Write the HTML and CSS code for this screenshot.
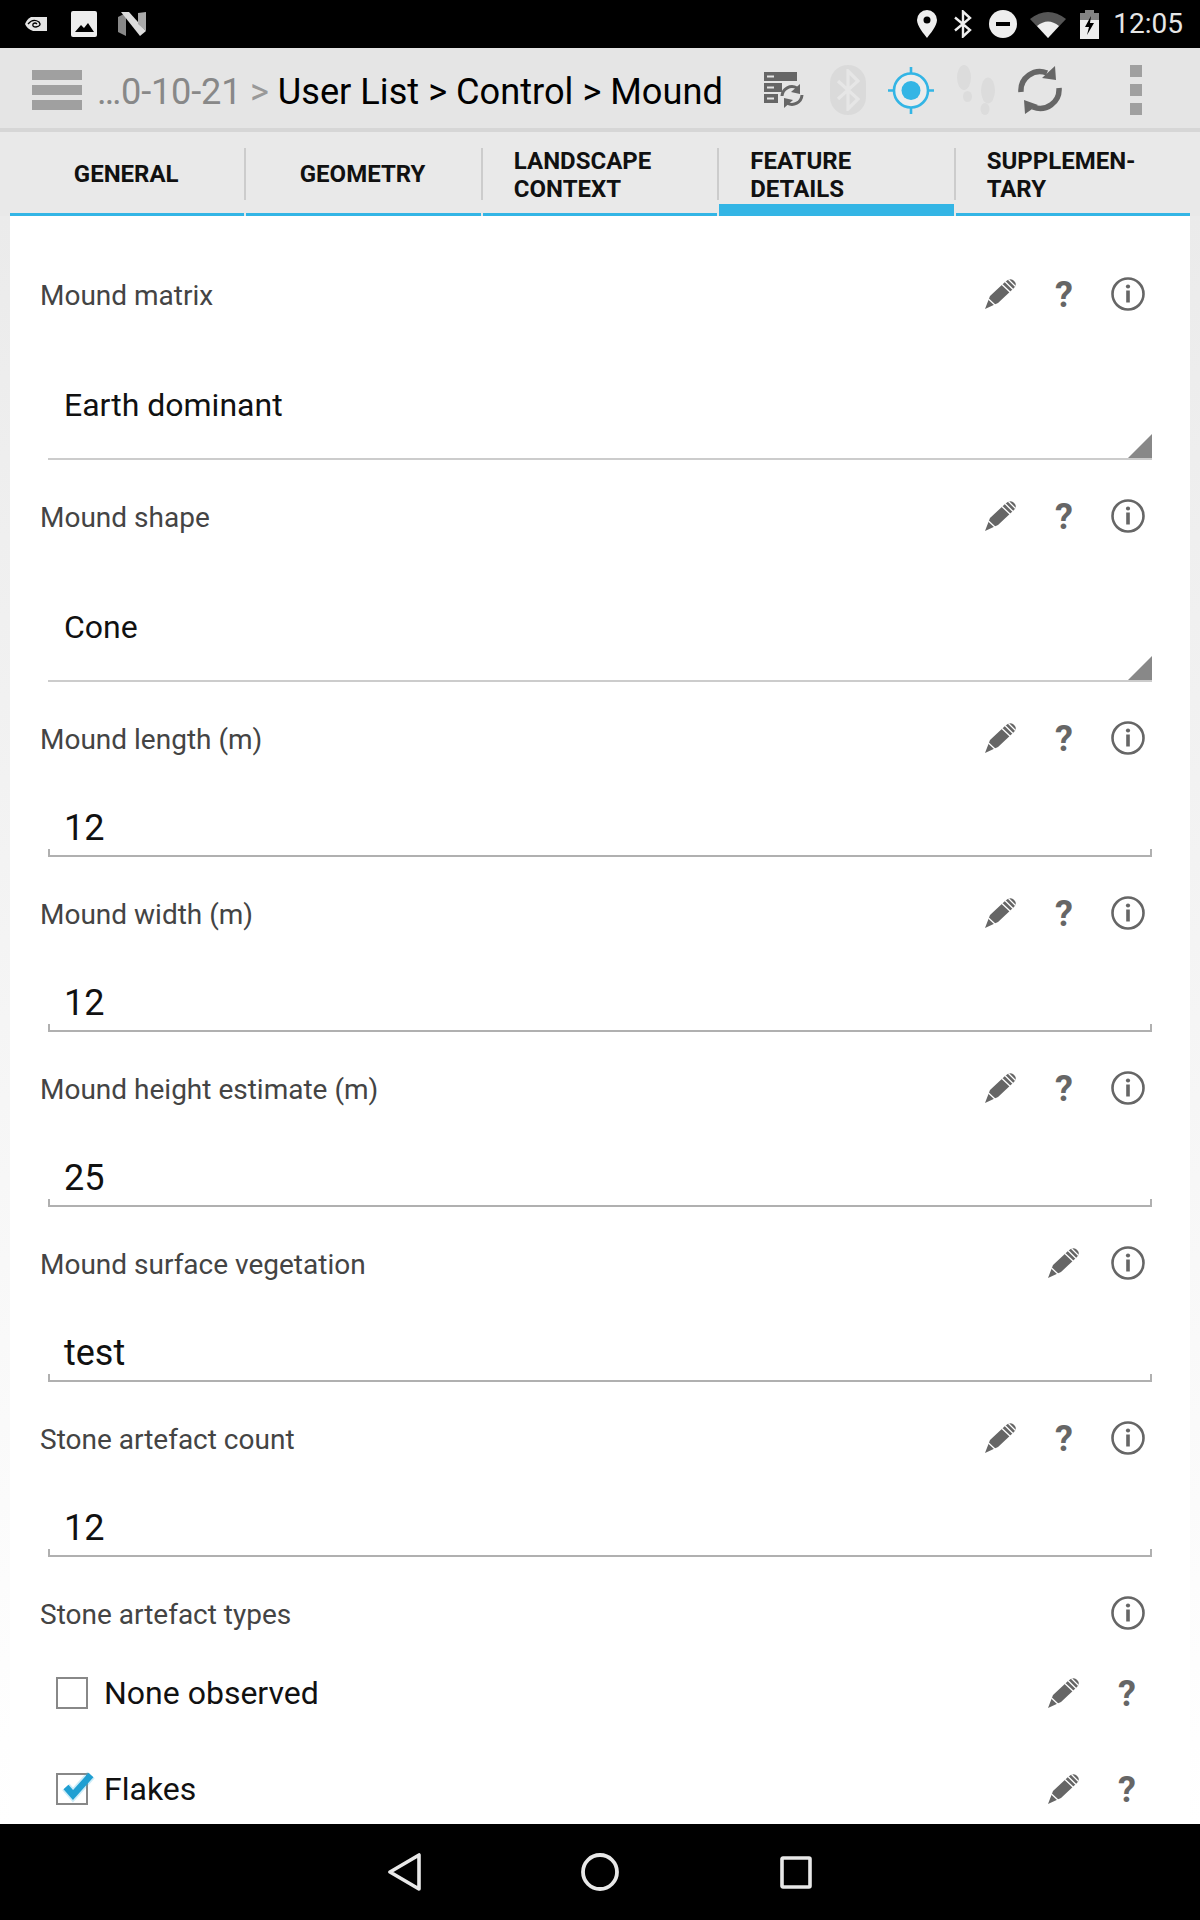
FILE: index.html

```html
<!DOCTYPE html>
<html>
	<head>
		<meta http-equiv="Content-Type" content="text/html; charset=utf-8" />
		<title>Mound</title>
		<link rel="stylesheet" href="styles.css">
	</head>
	<body>
		<svg class="defs" width="0" height="0">
			<symbol id="pencil" viewBox="0 0 32 32">
				<path d="M0 31 L5 18 L20 4 Q24 0 28 2 L30 4 Q32 7 29 10 L13 25 Z" fill="#666" />
				<path d="M3.5 21 L10.5 27.5 M17 6.5 L25.5 14.5 M20 3.5 L28 11.5 M23.5 1.5 L30.5 8.5" stroke="#fff" stroke-width="1.3" fill="none" />
			</symbol>
			<symbol id="info" viewBox="0 0 34 34">
				<circle cx="17" cy="17" r="15.5" fill="none" stroke="#666" stroke-width="2.6" />
				<circle cx="17" cy="9.5" r="2.1" fill="#666" />
				<rect x="15.2" y="13.5" width="3.6" height="12" fill="#666" />
			</symbol>
		</svg>
		<div id="screen">
			<div id="statusbar">
				<svg class="st-nvidia" width="22" height="14" viewBox="0 0 22 14">
					<path d="M6 0 H22 V14 H8 Q2 12 0 7 Q2 2 6 0 Z" fill="#e4e4e4" />
					<path d="M3 7 Q8 1 14 5 Q17 9 11 10 Q7 10 8 7 Q10 5 12 7" fill="none" stroke="#000" stroke-width="1.3" />
				</svg>
				<svg class="st-image" width="26" height="26" viewBox="0 0 26 26">
					<rect width="26" height="26" rx="2" fill="#eee" />
					<path d="M4 21 L10 14 L13 17 L17 12 L23 21 Z" fill="#000" />
				</svg>
				<svg class="st-n" width="28" height="24" viewBox="0 0 28 24">
					<path d="M0 5 L8 1 V24 L0 20 Z" fill="#888" />
					<path d="M3 0 H11 L28 19 L22 24 Z" fill="#ddd" />
					<path d="M20 1 L28 0 V19 L20 12 Z" fill="#aaa" />
				</svg>
				<div class="st-right">
					<svg width="20" height="28" viewBox="0 0 20 28"><path fill-rule="evenodd" d="M10 0 A10 10 0 0 1 20 10 C20 16 13 24 10 28 C7 24 0 16 0 10 A10 10 0 0 1 10 0 Z M10 6.5 A3.5 3.5 0 1 0 10 13.5 A3.5 3.5 0 1 0 10 6.5 Z" fill="#eee" /></svg>
					<svg class="st-bt" width="18" height="28" viewBox="0 0 18 28"><path d="M1 7.5 L16 20 L9 26.5 V1.5 L16 8 L1 20.5" fill="none" stroke="#eee" stroke-width="2.4" /></svg>
					<svg class="st-dnd" width="28" height="28" viewBox="0 0 28 28"><circle cx="14" cy="14" r="14" fill="#eee" /><rect x="7" y="12" width="14" height="4" fill="#000" /></svg>
					<svg class="st-wifi" width="36" height="28" viewBox="0 0 36 28"><path d="M0 9 Q18 -5 36 9 L18 28 Z" fill="#555" /><path d="M7 16 Q18 7 29 16 L18 28 Z" fill="#eee" /></svg>
					<svg class="st-batt" width="19" height="29" viewBox="0 0 19 29"><path d="M5 0 H14 V3 H19 V29 H0 V3 H5 Z" fill="#eee" /><path d="M0 0 H19 V10 H0 Z" fill="#000" opacity=".45" /><path d="M11 6 L5 17 H9 L7 25 L14 13 H10 Z" fill="#000" /></svg>
					<span class="st-time">12:05</span>
				</div>
			</div>

			<div id="actionbar">
				<div class="burger"><i></i><i></i><i></i></div>
				<div class="crumbs"><span class="crumb-old">…0-10-21 <b>&gt;</b></span> User List &gt; Control &gt; Mound</div>
				<svg class="ab-server" width="40" height="36" viewBox="0 0 40 36">
					<path d="M0 0 H33 V9 H0 Z M0 11 H18 V20 H0 Z M0 22 H14 V31 H0 Z" fill="#666" />
					<path d="M3 4.5 H10 M3 15.5 H10 M3 26.5 H10" stroke="#e5e5e5" stroke-width="2" />
					<path d="M18 24 A10 10 0 0 1 33 16" fill="none" stroke="#666" stroke-width="3" />
					<path d="M38 23 A10 10 0 0 1 23 31" fill="none" stroke="#666" stroke-width="3" />
					<path d="M36 12 V22 L27 20 Z M20 36 V26 L29 28 Z" fill="#666" />
				</svg>
				<div class="ab-bt">
					<svg width="24" height="42" viewBox="0 0 24 42"><path d="M2 12 L22 30 L12 40 V2 L22 12 L2 30" fill="none" stroke="#e6e6e6" stroke-width="3.2" /></svg>
				</div>
				<svg class="ab-target" width="46" height="47" viewBox="0 0 46 47">
					<circle cx="23" cy="23.5" r="17" fill="#ececec" stroke="#33b5e5" stroke-width="2.6" />
					<circle cx="23" cy="23.5" r="9.5" fill="#33b5e5" />
					<path d="M23 0 V7 M23 40 V47 M0 23.5 H7 M39 23.5 H46" stroke="#33b5e5" stroke-width="2.6" />
				</svg>
				<svg class="ab-feet" width="39" height="50" viewBox="0 0 39 50">
					<g fill="#dcdcdc">
						<ellipse cx="7" cy="12.5" rx="7" ry="12.5" />
						<ellipse cx="10.5" cy="31.5" rx="4.5" ry="5.5" />
						<ellipse cx="31" cy="25.5" rx="7" ry="13" />
						<ellipse cx="28" cy="44" rx="4.5" ry="6" />
					</g>
				</svg>
				<svg class="ab-sync" width="44" height="48" viewBox="0 0 44 48">
					<path d="M3 26 A19 19 0 0 1 29 7" fill="none" stroke="#666" stroke-width="5.5" />
					<path d="M41 22 A19 19 0 0 1 15 41" fill="none" stroke="#666" stroke-width="5.5" />
					<path d="M37 0 L24 12 L38 14 Z M7 48 L6 34 L20 39 Z" fill="#666" />
				</svg>
				<div class="overflow"><i></i><i></i><i></i></div>
			</div>

			<div id="tabs">
				<a class="tab"><span class="tab-label centered">GENERAL</span></a>
				<a class="tab"><span class="tab-label centered">GEOMETRY</span></a>
				<a class="tab"><span class="tab-label">LANDSCAPE<br>CONTEXT</span></a>
				<a class="tab active"><span class="tab-label">FEATURE<br>DETAILS</span></a>
				<a class="tab last"><span class="tab-label">SUPPLEMEN-<br>TARY</span></a>
			</div>

			<div id="content">
				<div id="card">
					<div class="field">
						<div class="field-head">
							<span class="field-name">Mound matrix</span>
							<svg class="ic-pencil"><use href="#pencil" /></svg><span class="ic-help">?</span><svg class="ic-info"><use href="#info" /></svg>
						</div>
						<div class="spinner">Earth dominant</div>
					</div>
					<div class="field">
						<div class="field-head">
							<span class="field-name">Mound shape</span>
							<svg class="ic-pencil"><use href="#pencil" /></svg><span class="ic-help">?</span><svg class="ic-info"><use href="#info" /></svg>
						</div>
						<div class="spinner">Cone</div>
					</div>
					<div class="field">
						<div class="field-head">
							<span class="field-name">Mound length (m)</span>
							<svg class="ic-pencil"><use href="#pencil" /></svg><span class="ic-help">?</span><svg class="ic-info"><use href="#info" /></svg>
						</div>
						<div class="input">12</div>
					</div>
					<div class="field">
						<div class="field-head">
							<span class="field-name">Mound width (m)</span>
							<svg class="ic-pencil"><use href="#pencil" /></svg><span class="ic-help">?</span><svg class="ic-info"><use href="#info" /></svg>
						</div>
						<div class="input">12</div>
					</div>
					<div class="field">
						<div class="field-head">
							<span class="field-name">Mound height estimate (m)</span>
							<svg class="ic-pencil"><use href="#pencil" /></svg><span class="ic-help">?</span><svg class="ic-info"><use href="#info" /></svg>
						</div>
						<div class="input">25</div>
					</div>
					<div class="field">
						<div class="field-head">
							<span class="field-name">Mound surface vegetation</span>
							<svg class="ic-pencil no-help"><use href="#pencil" /></svg><svg class="ic-info"><use href="#info" /></svg>
						</div>
						<div class="input">test</div>
					</div>
					<div class="field">
						<div class="field-head">
							<span class="field-name">Stone artefact count</span>
							<svg class="ic-pencil"><use href="#pencil" /></svg><span class="ic-help">?</span><svg class="ic-info"><use href="#info" /></svg>
						</div>
						<div class="input">12</div>
					</div>
					<div class="field">
						<div class="field-head">
							<span class="field-name">Stone artefact types</span>
							<svg class="ic-info"><use href="#info" /></svg>
						</div>
						<div class="check-row">
							<span class="checkbox"></span>
							<span class="check-name">None observed</span>
							<svg class="ic-pencil"><use href="#pencil" /></svg><span class="ic-help">?</span>
						</div>
						<div class="check-row">
							<span class="checkbox">
								<svg class="tick" width="36" height="34" viewBox="0 0 36 34"><path d="M5 18 L12 26 L30 6" fill="none" stroke="#33b5e5" stroke-opacity=".25" stroke-width="10" /><path d="M5 18 L12 26 L30 6" fill="none" stroke="#1f9fd2" stroke-width="6.5" /></svg>
							</span>
							<span class="check-name">Flakes</span>
							<svg class="ic-pencil"><use href="#pencil" /></svg><span class="ic-help">?</span>
						</div>
					</div>
				</div>
			</div>

			<div id="navbar">
				<svg width="34" height="38" viewBox="0 0 34 38"><path d="M31 2 V36 L2 19 Z" fill="none" stroke="#e8e8e8" stroke-width="3.6" stroke-linejoin="round" /></svg>
				<svg class="nav-home" width="38" height="38" viewBox="0 0 38 38"><circle cx="19" cy="19" r="17" fill="none" stroke="#e8e8e8" stroke-width="3.8" /></svg>
				<svg width="32" height="33" viewBox="0 0 32 33"><rect x="2" y="2" width="28" height="29" rx="1" fill="none" stroke="#e8e8e8" stroke-width="3.6" /></svg>
			</div>
		</div>
	</body>
</html>
```

FILE: styles.css

```css
body {margin:0;background:#fff;font-family:Roboto, "Liberation Sans", sans-serif;}
.defs {display:block;}
#screen {width:1200px;height:1920px;display:flex;flex-direction:column;overflow:hidden;}

#statusbar {background:#000;height:48px;flex:none;display:flex;align-items:center;padding:0 17px 0 25px;box-sizing:border-box;}
.st-image {margin-left:24px;}
.st-n {margin-left:21px;}
.st-right {margin-left:auto;display:flex;align-items:center;}
.st-bt {margin-left:17px;}
.st-dnd {margin-left:17px;}
.st-wifi {margin-left:13px;}
.st-batt {margin-left:14px;}
.st-time {margin-left:14px;color:#e6e6e6;font-size:28px;line-height:48px;}

#actionbar {background:#e5e5e5;height:84px;box-sizing:border-box;flex:none;border-bottom:4px solid #d6d6d6;display:flex;align-items:center;padding:4px 0 0 32px;}
.burger {width:50px;display:flex;flex-direction:column;gap:5px;}
.burger i {display:block;height:10px;background:#a0a0a0;}
.crumbs {margin-left:15px;width:667px;padding-top:3px;font-size:36.2px;color:#000;white-space:nowrap;}
.crumb-old {color:#888;letter-spacing:-.2px;}
.crumb-old b {font-weight:400;color:#999;}
.ab-bt {margin-left:26px;width:36px;height:50px;border-radius:18px;background:#dadada;display:flex;align-items:center;justify-content:center;}
.ab-target {margin-left:22px;}
.ab-feet {margin-left:23px;}
.ab-sync {margin-left:22px;}
.overflow {margin-left:68px;width:12px;display:flex;flex-direction:column;gap:7px;}
.overflow i {display:block;height:12px;background:#a0a0a0;}

#tabs {background:#e9e9e9;height:84px;flex:none;display:flex;padding:0 10px;}
.tab {flex:1;margin-right:2px;padding-top:16px;box-sizing:border-box;border-bottom:3px solid #33b5e5;color:#111;font-size:24px;font-weight:700;line-height:28px;}
.tab.last {margin-right:0;}
.tab-label {display:flow-root;height:52px;margin-right:-2px;padding-left:31px;box-sizing:border-box;border-right:2px solid #ccc;}
.tab-label:before {content:"";display:block;margin-top:-1px;}
.tab-label.centered {padding:0 2px 0 0;text-align:center;line-height:54px;}
.tab.last .tab-label {border-right:0;}
.tab.active {border-bottom-width:12px;}

#content {flex:1;min-height:0;overflow:hidden;padding:0 10px;background:linear-gradient(#ebebeb, #fff);}
#card {background:#fff;height:100%;padding-top:40px;box-sizing:border-box;}

.field {margin-bottom:18px;}
.field-head {height:76px;display:flex;align-items:center;padding:0 45px 0 30px;}
.field-name {flex:1;padding-top:2px;font-size:28px;color:#444;}
.ic-pencil {width:32px;height:32px;}
.ic-help {width:30px;margin:0 32px;padding-top:2px;text-align:center;font-size:36px;line-height:36px;font-weight:700;color:#666;}
.ic-info {width:34px;height:34px;}
.ic-pencil.no-help {margin-right:31px;}

.spinner, .input {margin:0 38px;padding-left:14px;line-height:40px;color:#111;}
.spinner {position:relative;height:128px;padding-top:53px;padding-left:16px;box-sizing:border-box;font-size:32px;border-bottom:2px solid #ccc;}
.spinner:after {content:"";position:absolute;right:0;bottom:0;border-style:solid;border-width:0 0 24px 24px;border-color:transparent transparent #888 transparent;}
.input {height:81px;padding-top:32px;box-sizing:border-box;font-size:36px;border:2px solid #b0b0b0;border-top:0;}
.input {border-image:linear-gradient(transparent 0, transparent calc(100% - 8px), #b0b0b0 calc(100% - 8px)) 2;}

.check-row {height:80px;margin-top:16px;display:flex;align-items:center;padding:0 48px 0 46px;}
.field-head + .check-row {margin-top:2px;}
.checkbox {width:32px;height:32px;box-sizing:border-box;border:2px solid #888;position:relative;}
.tick {position:absolute;left:3px;top:-6px;}
.check-name {flex:1;margin-left:16px;font-size:32px;color:#111;}
.check-row .ic-help {margin-right:0;}

#navbar {background:#000;height:96px;flex:none;display:flex;align-items:center;padding-left:388px;}
.nav-home {margin:0 161px 0 159px;}
```
